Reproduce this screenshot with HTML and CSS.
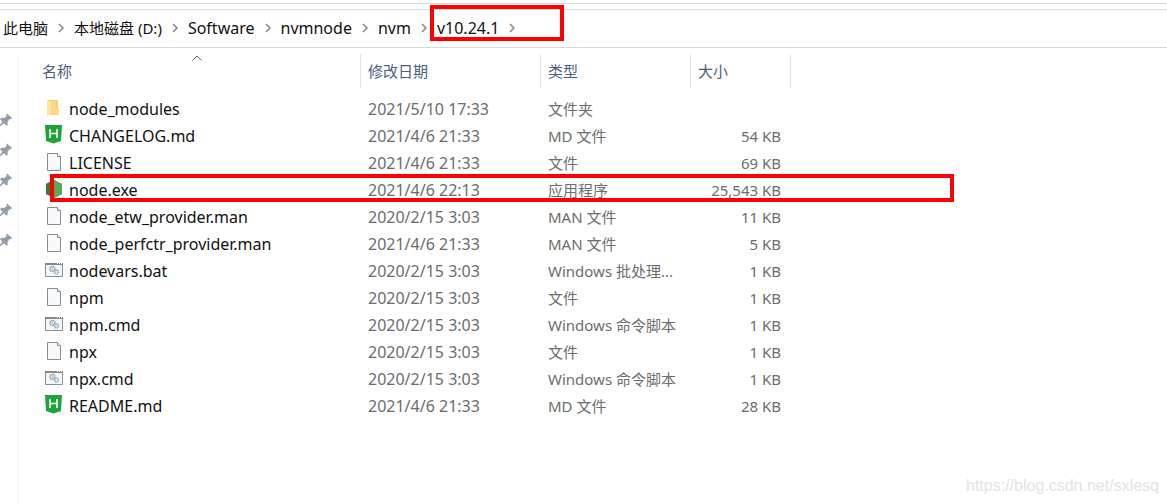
FILE: index.html
```html
<!DOCTYPE html>
<html lang="zh-CN">
<head>
<meta charset="utf-8">
<title>v10.24.1</title>
<link rel="stylesheet" href="styles.css">
</head>
<body>
<svg class="defs" aria-hidden="true">
  <symbol id="chev" viewBox="0 0 6 10"><path d="M1 1l4 4-4 4" fill="none" stroke="#858585" stroke-width="1.5"/></symbol>
  <symbol id="pin" viewBox="0 0 12 14"><path d="M7 .5l5 4.500-1 1.200-1.200-.2-2.200 2.800.2 2.700-1.400 1.300-2.300-2.500L0 13.500l-.8-.8 3.300-4L0 6.200l1.200-1.400 3 .2L6.800 2.800 6.200 1.500z" fill="#949ea8"/></symbol>
  <symbol id="folder" viewBox="0 0 18 20"><path d="M2 2h11v15H2z" fill="#f5cf72"/><path d="M2 2l4 2v14l-4-1z" fill="#ffe49b"/><path d="M6 3h5v14H6z" fill="#f9d87f"/><path d="M11 11h3v6h-3z" fill="#fbdc8b"/></symbol>
  <symbol id="md" viewBox="0 0 18 20"><path d="M0 0h17l-1 16-7.500 2.500L1 16z" fill="#1fa33b"/><path d="M5 4v9M12 4v9M5 8.500h7" fill="none" stroke="#fff" stroke-width="1.500"/></symbol>
  <symbol id="file" viewBox="0 0 18 20"><path d="M2.500 1.500h10l3 3v14h-13z" fill="#f8f9fa" stroke="#8b8e91"/><path d="M12.500 1.500v3h3" fill="#fff" stroke="#8b8e91"/></symbol>
  <symbol id="node" viewBox="0 0 18 20"><path d="M9 1l8 4v10l-8 4-8-4V5z" fill="#438d3e"/><path d="M9 1l8 4v10l-8 4z" fill="#5fa653"/><path d="M1 5l8-4-3 16-5-2z" fill="#397d36"/></symbol>
  <symbol id="bat" viewBox="0 0 18 20"><path d="M.5 3.500h17v13H.5z" fill="#f5f6f7" stroke="#8b8e91"/><path d="M0 3h18v2H0z" fill="#83888c"/><path d="M12 3.500h1M14 3.500h1M16 3.500h1" stroke="#fff"/><circle cx="7.500" cy="9" r="2.500" fill="none" stroke="#8d9296" stroke-width="1.500" stroke-dasharray="1.200 .5"/><circle cx="7.500" cy="9" r=".8" fill="#8d9296"/><circle cx="11.500" cy="12" r="2" fill="#dcebf4" stroke="#83abc6" stroke-width="1.300" stroke-dasharray="1.200 .4"/></symbol>
</svg>
<div class="explorer">
  <nav class="address" aria-label="路径">
    <a class="crumb cjk" href="#">此电脑</a><svg class="chev"><use href="#chev"/></svg>
    <a class="crumb cjk" href="#">本地磁盘 (D:)</a><svg class="chev"><use href="#chev"/></svg>
    <a class="crumb" href="#">Software</a><svg class="chev"><use href="#chev"/></svg>
    <a class="crumb" href="#">nvmnode</a><svg class="chev"><use href="#chev"/></svg>
    <a class="crumb" href="#">nvm</a><svg class="chev"><use href="#chev"/></svg>
    <span class="marked"><a class="crumb" href="#">v10.24.1</a><svg class="chev"><use href="#chev"/></svg></span>
  </nav>
  <div class="content">
    <aside class="pins">
      <svg class="pin"><use href="#pin"/></svg>
      <svg class="pin"><use href="#pin"/></svg>
      <svg class="pin"><use href="#pin"/></svg>
      <svg class="pin"><use href="#pin"/></svg>
      <svg class="pin"><use href="#pin"/></svg>
    </aside>
    <main class="files">
      <table class="list">
        <colgroup><col class="c-name"><col class="c-date"><col class="c-type"><col class="c-size"></colgroup>
        <thead><tr><th class="sorted">名称<svg class="sort" viewBox="0 0 10 6"><path d="M.5 5.500L5 1l4.500 4.500" fill="none" stroke="#666"/></svg></th><th>修改日期</th><th>类型</th><th>大小</th></tr></thead>
        <tbody>
          <tr><td><svg class="icon"><use href="#folder"/></svg>node_modules</td><td>2021/5/10 17:33</td><td>文件夹</td><td></td></tr>
          <tr><td><svg class="icon"><use href="#md"/></svg>CHANGELOG.md</td><td>2021/4/6 21:33</td><td>MD 文件</td><td>54 KB</td></tr>
          <tr><td><svg class="icon"><use href="#file"/></svg>LICENSE</td><td>2021/4/6 21:33</td><td>文件</td><td>69 KB</td></tr>
          <tr class="target"><td><svg class="icon"><use href="#node"/></svg>node.exe</td><td>2021/4/6 22:13</td><td>应用程序</td><td>25,543 KB</td></tr>
          <tr><td><svg class="icon"><use href="#file"/></svg>node_etw_provider.man</td><td>2020/2/15 3:03</td><td>MAN 文件</td><td>11 KB</td></tr>
          <tr><td><svg class="icon"><use href="#file"/></svg>node_perfctr_provider.man</td><td>2021/4/6 21:33</td><td>MAN 文件</td><td>5 KB</td></tr>
          <tr><td><svg class="icon"><use href="#bat"/></svg>nodevars.bat</td><td>2020/2/15 3:03</td><td>Windows 批处理...</td><td>1 KB</td></tr>
          <tr><td><svg class="icon"><use href="#file"/></svg>npm</td><td>2020/2/15 3:03</td><td>文件</td><td>1 KB</td></tr>
          <tr><td><svg class="icon"><use href="#bat"/></svg>npm.cmd</td><td>2020/2/15 3:03</td><td>Windows 命令脚本</td><td>1 KB</td></tr>
          <tr><td><svg class="icon"><use href="#file"/></svg>npx</td><td>2020/2/15 3:03</td><td>文件</td><td>1 KB</td></tr>
          <tr><td><svg class="icon"><use href="#bat"/></svg>npx.cmd</td><td>2020/2/15 3:03</td><td>Windows 命令脚本</td><td>1 KB</td></tr>
          <tr><td><svg class="icon"><use href="#md"/></svg>README.md</td><td>2021/4/6 21:33</td><td>MD 文件</td><td>28 KB</td></tr>
        </tbody>
      </table>
    </main>
  </div>
  <div class="watermark">https://blog.csdn.net/sxlesq</div>
</div>
</body>
</html>
```
FILE: styles.css
```css
*, *::before, *::after { box-sizing: border-box; }
body {
  margin: 0;
  background: #fff;
  color: #111;
  font: 15px/20px "Noto Sans", "Noto Sans CJK SC", sans-serif;
}
.defs { position: absolute; width: 0; height: 0; }
.explorer {
  position: relative;
  display: flex;
  flex-direction: column;
  min-height: 100vh;
  padding-top: 3px;
  overflow: hidden;
}
.explorer::before { content: ""; height: 1px; background: #d9d9d9; }
.address {
  display: flex;
  align-items: center;
  height: 39px;
  margin-top: 5px;
  padding: 0 0 2px 3px;
  border-top: 1px solid #d9d9d9;
  border-bottom: 1px solid #d9d9d9;
  white-space: nowrap;
}
.crumb { color: #111; font-size: 16px; text-decoration: none; }
.cjk { font-size: 15px; }
.chev { flex: none; width: 6px; height: 10px; margin: 0 10px; }
.marked { position: relative; display: flex; align-items: center; }
.marked::after {
  content: "";
  position: absolute;
  left: -7px;
  top: -13px;
  width: 134px;
  height: 36px;
  border: 4px solid #f00;
}
.content { display: flex; flex: 1; }
.pins {
  display: flex;
  flex-direction: column;
  gap: 16px;
  width: 19px;
  margin-top: 7px;
  padding-top: 58px;
  border-right: 1px solid #f3f3f3;
}
.pin { width: 12px; height: 14px; overflow: visible; }
.files { flex: 1; padding: 6px 0 0 15px; }
.list { width: 757px; table-layout: fixed; border-collapse: separate; border-spacing: 0; }
.c-name { width: 327px; }
.c-date { width: 180px; }
.c-type { width: 150px; }
.c-size { width: 100px; }
th {
  height: 34px;
  padding: 0 0 0 7px;
  border-right: 1px solid #e2e2e2;
  color: #4c607a;
  font-weight: 400;
  text-align: left;
}
.sorted { position: relative; padding-left: 8px; }
.sort { position: absolute; left: 158px; top: 1px; width: 10px; height: 6px; }
tbody::before { content: ""; display: block; height: 7px; }
td { height: 27px; padding: 0 0 0 7px; color: #6d6d6d; white-space: nowrap; }
td:first-child, td:nth-child(2) { font-size: 16px; }
td:first-child { padding-left: 11px; color: #111; }
td:last-child { padding: 0 10px 0 0; text-align: right; }
.icon { width: 18px; height: 20px; margin-right: 6px; vertical-align: -3px; }
.target { position: relative; }
.target td:first-child::after {
  content: "";
  position: absolute;
  left: 16px;
  top: -2px;
  width: 904px;
  height: 28px;
  border: 4px solid #f00;
}
.watermark {
  position: absolute;
  right: 8px;
  bottom: 8px;
  color: #e3e3e3;
  font: 16px/20px "Liberation Sans", sans-serif;
}
```
